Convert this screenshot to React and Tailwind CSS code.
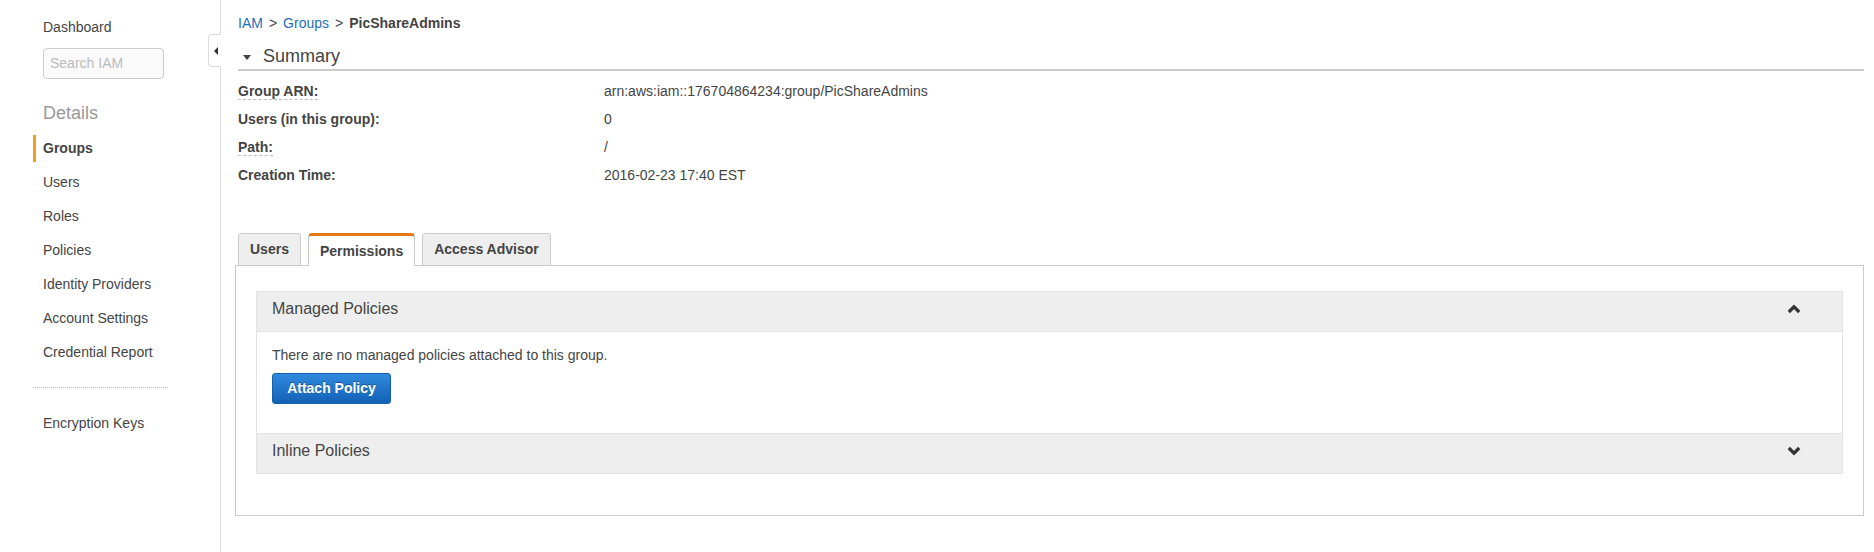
import React from 'react';

const navItems = ['Groups', 'Users', 'Roles', 'Policies', 'Identity Providers', 'Account Settings', 'Credential Report'];

const Chevron = ({ up }) => (
    <svg width="14" height="10" viewBox="0 0 14 10" className="text-[#333]">
        <polyline
            points={up ? '1.8,8 7,2.8 12.2,8' : '1.8,2 7,7.2 12.2,2'}
            fill="none"
            stroke="currentColor"
            strokeWidth="3.2"
        />
    </svg>
);

const App = () => {
    const rows = [
        { label: 'Group ARN:', value: 'arn:aws:iam::176704864234:group/PicShareAdmins', dashed: true },
        { label: 'Users (in this group):', value: '0' },
        { label: 'Path:', value: '/', dashed: true },
        { label: 'Creation Time:', value: '2016-02-23 17:40 EST' },
    ];

    return (
        <div className="flex w-[1874px] h-[552px] bg-white text-[#444] text-[14px] font-['Liberation_Sans',Arial,sans-serif]">
            {/* Sidebar */}
            <aside className="relative w-[221px] shrink-0 border-r border-[#ddd] pt-[17px]">
                <div className="pl-[43px] leading-5">Dashboard</div>
                <div className="pl-[43px] mt-[11px]">
                    <div className="w-[121px] h-[31px] rounded-[4px] border border-[#ccc] bg-[#fafafa] flex items-center pl-[6px] text-[#bbb]">
                        Search IAM
                    </div>
                </div>
                <div className="pl-[43px] mt-[22px] text-[18px] leading-6 text-[#999]">Details</div>
                <nav className="mt-[6px] pl-[33px]">
                    {navItems.map((item, i) => (
                        <div key={item} className="h-[34px] flex items-center">
                            <span
                                className={
                                    i === 0
                                        ? 'h-[27px] flex items-center border-l-[3px] border-[#f79c1d] pl-[7px] font-bold'
                                        : 'h-[27px] flex items-center border-l-[3px] border-transparent pl-[7px]'
                                }
                            >
                                {item}
                            </span>
                        </div>
                    ))}
                </nav>
                <div className="ml-[33px] w-[135px] mt-[18px] border-t border-dotted border-[#bbb]"></div>
                <div className="mt-[18px] pl-[43px] h-[34px] flex items-center">Encryption Keys</div>

                {/* collapse toggle */}
                <div className="absolute right-[-1px] top-[34px] w-[13px] h-[33px] bg-white border border-r-0 border-[#ddd] rounded-l-[4px] flex items-center justify-center">
                    <div className="w-0 h-0 border-y-[4px] border-y-transparent border-r-[4px] border-r-[#333] ml-[1px]"></div>
                </div>
            </aside>

            {/* Main */}
            <main className="flex-1 pl-[14px] pr-[10px] pt-[13px]">
                <div className="pl-[3px] leading-5">
                    <span className="text-[#1f6fb9]">IAM</span>
                    <span className="mx-[6px]">&gt;</span>
                    <span className="text-[#1f6fb9]">Groups</span>
                    <span className="mx-[6px]">&gt;</span>
                    <span className="font-bold">PicShareAdmins</span>
                </div>

                <div className="ml-[3px] mt-[12px] h-[24px] flex items-center border-b-2 border-[#ccc] box-content">
                    <div className="ml-[5px] w-0 h-0 border-x-[4px] border-x-transparent border-t-[5px] border-t-[#444]"></div>
                    <span className="ml-[12px] text-[18px] leading-6 -mt-[2px]">Summary</span>
                </div>

                <div className="ml-[3px] mt-[6px]">
                    {rows.map((r) => (
                        <div key={r.label} className="h-7 flex items-center">
                            <div className="w-[366px]">
                                <span
                                    className={
                                        r.dashed
                                            ? 'inline-block font-bold leading-4 border-b border-dashed border-[#bbb]'
                                            : 'inline-block font-bold leading-4'
                                    }
                                >
                                    {r.label}
                                </span>
                            </div>
                            <div>{r.value}</div>
                        </div>
                    ))}
                </div>

                {/* Tabs */}
                <div className="mt-[44px] pl-[3px] flex gap-[7px] h-[33px] -mb-px relative z-10">
                    <div className="px-[11px] flex items-center font-bold bg-[#eee] border border-[#ccc] rounded-t-[3px]">Users</div>
                    <div className="px-[11px] flex items-center font-bold bg-white border-x border-[#ccc] border-t-[3px] border-t-[#e47911] rounded-t-[4px]">Permissions</div>
                    <div className="px-[11px] flex items-center font-bold bg-[#eee] border border-[#ccc] rounded-t-[3px]">Access Advisor</div>
                </div>

                <div className="border border-[#ccc] pt-[25px] px-[20px] pb-[41px]">
                    <div className="border border-[#e3e3e3]">
                        <div className="h-[40px] bg-[#eee] flex items-center justify-between pl-[15px] pr-[41px] pb-[6px] border-b border-[#e3e3e3]">
                            <span className="text-[16px]">Managed Policies</span>
                            <Chevron up />
                        </div>
                        <div className="h-[101px] bg-white pl-[15px] pt-[13px]">
                            <div className="leading-5">There are no managed policies attached to this group.</div>
                            <button className="mt-[8px] w-[119px] h-[31px] rounded-[3px] border border-[#1560ad] bg-gradient-to-b from-[#3089dd] to-[#1262b6] text-white font-bold [text-shadow:0_-1px_0_rgba(0,0,0,0.35)]">
                                Attach Policy
                            </button>
                        </div>
                        <div className="h-[40px] bg-[#eee] flex items-center justify-between pl-[15px] pr-[41px] pb-[6px] border-t border-[#e3e3e3]">
                            <span className="text-[16px]">Inline Policies</span>
                            <Chevron />
                        </div>
                    </div>
                </div>
            </main>
        </div>
    );
};

export default App;
